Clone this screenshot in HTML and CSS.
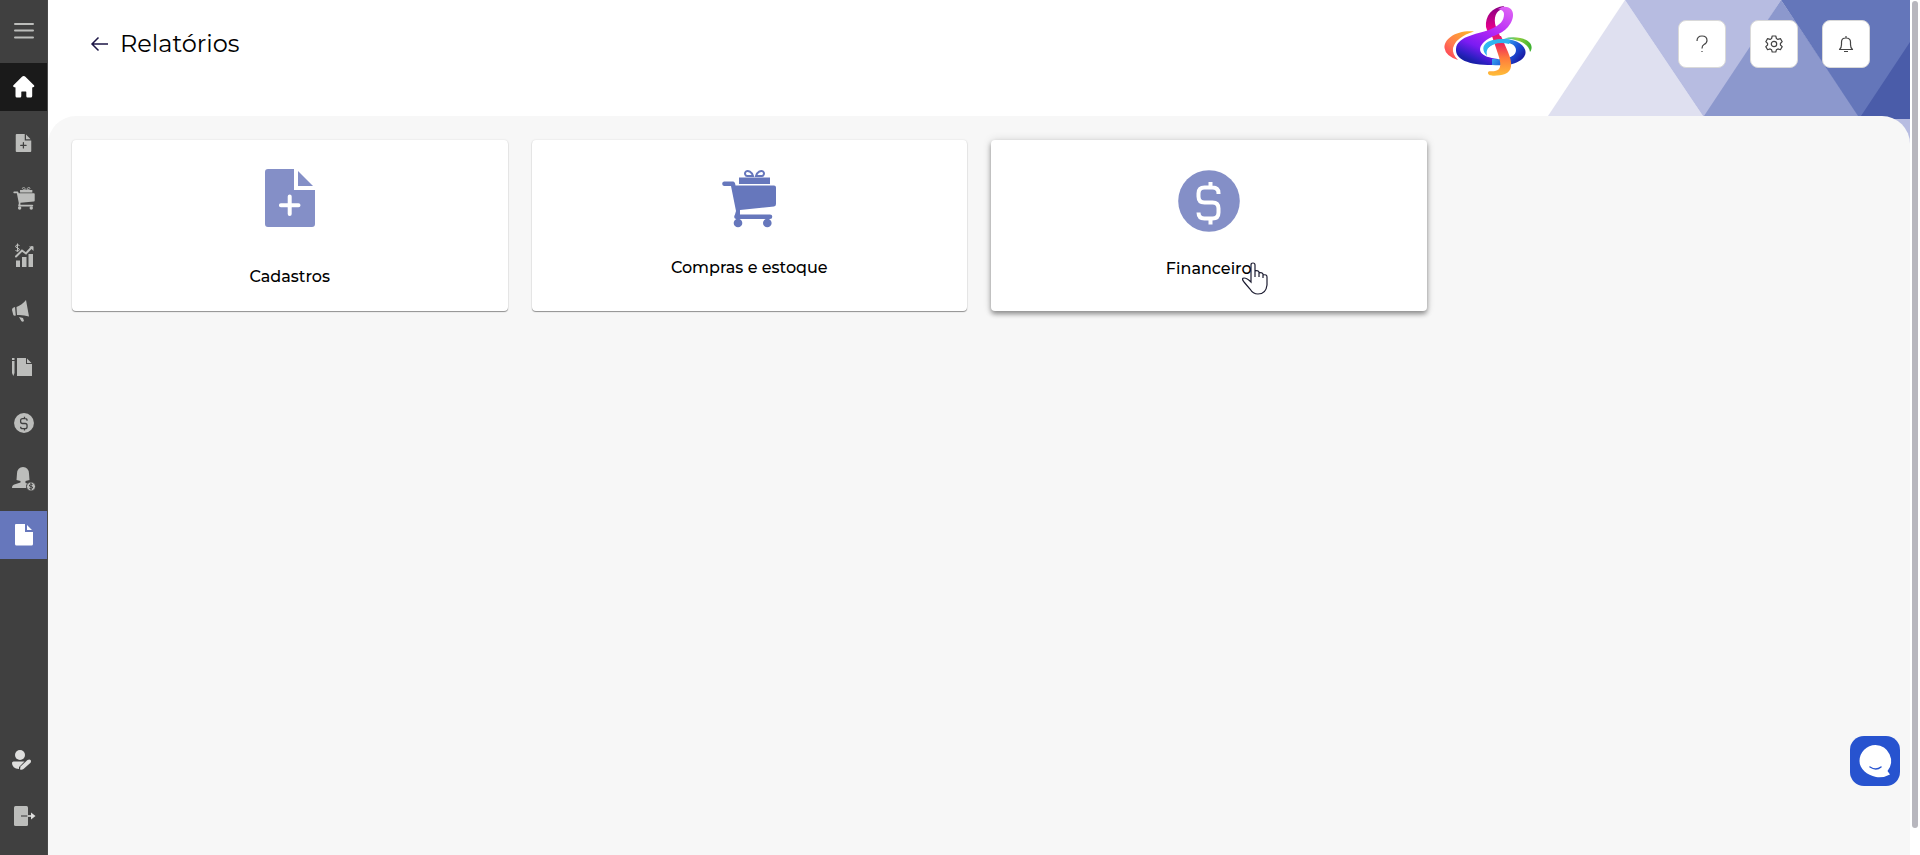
FILE: index.html
```html
<!DOCTYPE html>
<html lang="pt-BR">
<head>
  <meta charset="UTF-8" />
  <title>Relatórios</title>
  <meta name="viewport" content="width=device-width, initial-scale=1.0" />
  <link rel="stylesheet" href="styles.css">
</head>
<body>
  <!-- shared icons -->
  <svg class="sprite" aria-hidden="true">
    <symbol id="i-doc-plus" viewBox="0 0 50 58">
      <path fill-rule="evenodd" d="M3 0h26v21h21v34q0 3-3 3H3q-3 0-3-3V3q0-3 3-3zM22.700 27.500v6.800h-6.800a2 2 0 0 0 0 4h6.800v6.800a2 2 0 0 0 4 0v-6.800h6.800a2 2 0 0 0 0-4h-6.800v-6.800a2 2 0 0 0-4 0z"/>
      <path d="M33 2v15h15z"/>
    </symbol>
    <symbol id="i-cart" viewBox="0 0 54 58">
      <path d="M2 11.500h9q2 0 2.500 4H52q2 0 2 2V34q0 2-2 2.500L18 40v4.500h30a2.300 2.300 0 0 1 0 4.600H14q-3-1-1-4.500L14 41 9 16H2a2.300 2.300 0 0 1 0-4.500z"/>
      <path d="M17 7.500h31v6.500H17z"/>
      <circle cx="16" cy="53" r="4.300"/>
      <circle cx="45.300" cy="53" r="4.300"/>
      <path d="M31 6c-1-4-5-6-7-4.500S23.500 6 25 6zM34 6c1-4 5-6 7-4.500S41.500 6 40 6z" fill="none" stroke="currentColor" stroke-width="2"/>
    </symbol>
    <symbol id="i-dollar" viewBox="0 0 62 62">
      <circle cx="31" cy="31" r="30.800"/>
      <path class="cut" d="M40.500 24v-1q0-5.500-6-5.500h-8q-6 0-6 6v3q0 6 6 6h8q6 0 6 6v4q0 6-6 6h-8q-6 0-6-6M32.500 12v6M32.500 49v5.500"/>
    </symbol>
  </svg>

  <div class="app">
    <nav class="sidebar" aria-label="Menu principal">
      <button type="button" class="side-item" aria-label="Abrir menu">
        <svg viewBox="0 0 24 24"><path class="line" d="M3 5h18M3 11.500h18M3 18.500h18"/></svg>
      </button>
      <a href="#" class="side-item home" aria-label="Início">
        <svg viewBox="0 0 24 24"><path d="M11.700 1q1 0 1.700.8l8.800 8.700q.6 1.500-1.200 1.700l-.8.300V21q0 1.500-1.500 1.500h-3.200q-1.200 0-1.200-1.500v-4q0-.5-.5-.5h-4q-.5 0-.5.500v4q0 1.500-1.200 1.500H4.900q-1.400 0-1.400-1.500v-8.500l-1-.3Q.7 12 1.200 10.500L10 1.800Q10.800 1 11.700 1z"/></svg>
      </a>
      <a href="#" class="side-item" aria-label="Cadastros">
        <svg viewBox="0 0 24 24"><use href="#i-doc-plus" x="3" y="3" width="17" height="18"/></svg>
      </a>
      <a href="#" class="side-item" aria-label="Compras e estoque">
        <svg viewBox="0 0 24 24"><use href="#i-cart" x="1" y="0" width="22" height="23"/></svg>
      </a>
      <a href="#" class="side-item" aria-label="Vendas">
        <svg viewBox="0 0 24 24">
          <path d="M4 17.500h4V24H4zM10 14h4.500v10H10zM16.500 11H21v13h-4.500z"/>
          <path class="line" d="M4 13.500l6-6 4 3 6-6.500"/>
          <path d="M17 3.500h4.500V8z"/>
          <path class="thin" d="M7.500 2.500q-2-1.500-3.500 0T5.500 5q3 1 1.500 2.500t-3.500 0M5.500.500v8"/>
        </svg>
      </a>
      <a href="#" class="side-item" aria-label="Marketing">
        <svg viewBox="0 0 24 24"><path d="M14 1l3 16.500q-6-2-12-1.500L4.500 8Q10 6 14 1zM3 8l.8 8.500q-1.800.5-2.500-.5L0 11q0-2.500 3-3zM7 18l4 1 1 3q-1.500 1.500-2.700 0z"/></svg>
      </a>
      <a href="#" class="side-item" aria-label="Ordens de serviço">
        <svg viewBox="0 0 24 24"><path d="M0 3h2.500v2H0zM0 6h2.500v12l-1.200 3L0 18zM5 3h9v6h6v12H5zM15 3.500L19.500 8H15z"/></svg>
      </a>
      <a href="#" class="side-item" aria-label="Financeiro">
        <svg viewBox="0 0 24 24"><use href="#i-dollar" x="2" y="2" width="20" height="20"/></svg>
      </a>
      <a href="#" class="side-item" aria-label="Comissões">
        <svg viewBox="0 0 24 24">
          <path d="M11 0q5.500 0 6 6.500l.5 6.500-4 1v2l3 1v4H0q0-3 3-3.700l5.500-1.800V14l-4-1L5 6.500Q5.500 0 11 0z"/>
          <circle class="ring" cx="19" cy="19.500" r="4.500"/>
          <path class="cut-thin" d="M20.500 17.500q-2.500-1-3 .5t1.500 1.500 1.500 1.500-3 .5M19 16v7"/>
        </svg>
      </a>
      <a href="#" class="side-item current" aria-label="Relatórios" aria-current="page">
        <svg viewBox="0 0 24 24"><path d="M4 1h9v8h8v12q0 1.500-1.500 1.500h-15Q3 22.500 3 21V2q0-1 1-1zM15 2l5 5h-5z"/></svg>
      </a>
      <a href="#" class="side-item bottom" aria-label="Meu perfil">
        <svg viewBox="0 0 24 24"><circle cx="8" cy="7" r="5"/><path d="M1.500 13.500h11L7 19v2Q0 20.500 0 15q0-1.500 1.500-1.500z"/><path d="M8 21.500l.5-3 7-6.500q2-1 3 0t0 2.800l-7 6.200q-1.500 1-3.500.500z"/></svg>
      </a>
      <a href="#" class="side-item" aria-label="Sair">
        <svg viewBox="0 0 24 24"><rect x="2" y="2" width="14" height="20" rx="1.500"/><path class="cut" d="M9 12h7"/><path class="line" d="M16 12h4"/><path class="light" d="M19 8.500l4.500 3.500-4.500 3.500z"/></svg>
      </a>
    </nav>

    <main class="page">
      <svg class="pattern" viewBox="0 0 364 144" aria-hidden="true">
        <path fill="#dfe0f0" d="M0 119L79 0l80 119z"/>
        <path fill="#b7bce1" d="M79 0h156l-76 119z"/>
        <path fill="#8c98cd" d="M235 0l80 119H156z"/>
        <path fill="#6476ba" d="M235 0h129v119h-50z"/>
        <path fill="#4a5ca9" d="M364 42v77h-51z"/>
        <path fill="#b7bce1" d="M313 119h51v25h-51z"/>
      </svg>

      <header class="topbar">
        <a href="#" class="back" aria-label="Voltar">
          <svg viewBox="0 0 18 16"><path d="M18 8H2M8.500 1.500L2 8l6.500 6.500"/></svg>
        </a>
        <h1>Relatórios</h1>

        <svg class="logo" viewBox="0 0 140 88" role="img" aria-label="Logo">
          <defs>
            <linearGradient id="g-left" x1="0" y1="1" x2="1" y2="0"><stop offset="0" stop-color="#ff315c"/><stop offset=".4" stop-color="#ff7a50"/><stop offset="1" stop-color="#fdbb21"/></linearGradient>
            <linearGradient id="g-stem" gradientUnits="userSpaceOnUse" x1="0" y1="7" x2="0" y2="75"><stop offset="0" stop-color="#8a0080"/><stop offset=".3" stop-color="#e2008c"/><stop offset=".55" stop-color="#ee2a5a"/><stop offset=".75" stop-color="#ff7a3c"/><stop offset="1" stop-color="#ffbb38"/></linearGradient>
            <linearGradient id="g-ring" gradientUnits="userSpaceOnUse" x1="88" y1="8" x2="62" y2="66"><stop offset="0" stop-color="#dd62f5"/><stop offset=".45" stop-color="#b327f5"/><stop offset=".75" stop-color="#7a1bf2"/><stop offset=".93" stop-color="#2f1fc4"/><stop offset="1" stop-color="#1a1fa8"/></linearGradient>
            <linearGradient id="g-cyan" gradientUnits="userSpaceOnUse" x1="64" y1="40" x2="96" y2="65"><stop offset="0" stop-color="#2cc4f2"/><stop offset=".45" stop-color="#36a2ee"/><stop offset=".75" stop-color="#1c52d8"/><stop offset="1" stop-color="#1a1fa8"/></linearGradient>
            <linearGradient id="g-green" x1="0" y1="0" x2="1" y2="0"><stop offset="0" stop-color="#1fbcae"/><stop offset=".5" stop-color="#93ce3d"/><stop offset="1" stop-color="#39b02f"/></linearGradient>
          </defs>
          <path fill="url(#g-left)" d="M54 31.500C36 30 24 39 24.500 48q1 8 13.500 12-6-6-5-12 3-11 21-16.500z"/>
          <path fill="url(#g-green)" d="M84 38.500C100 34 117 42 110 52c-1-8-11-13-26-13.500z"/>
          <path fill="url(#g-stem)" d="M84 6C72 7 65 16 66 27l3 9h11l-4-9c-3-9 0-17 7-18z"/>
          <path fill="url(#g-ring)" d="M82 7c13-2 14 11 6 20-7 8-18 9-24 15-8 8-4 15 14 17v6C50 66 35 60 36 49 37 35 61 34 71 29c9-4 13-8 13-15q0-4-6-5z"/>
          <path fill="url(#g-cyan)" d="M67 56c-8-8-3-17 15-17 20-1 30 13 19 21-7 5-18 6-29 5v-6c17 1 24-3 24-9 0-8-14-9-22-6-7 3-8 7-7 12z"/>
          <path fill="url(#g-stem)" d="M72 36h9l7 16c5 12 4 19-3 22-6 2-17 3-17-1 0-3 4-1 7-2 7-1 6-8 3-17z"/>
          <path fill="#32b3ef" d="M68 43c5-4 13-5 22-3l-1 4c-8-2-16-1-21 4z"/>
        </svg>

        <div class="actions">
          <button type="button" aria-label="Ajuda">
            <svg viewBox="0 0 18 18"><path d="M4 6q0-5 5-5t5 4.500q0 2.500-3 4-2 1-2 4M9 16v1"/></svg>
          </button>
          <button type="button" aria-label="Configurações">
            <svg viewBox="0 0 18 18"><circle cx="9" cy="9" r="2.700"/><path d="M7.200 1h3.600l.6 2.500 1.500.9 2.500-.8 1.800 3.100-1.800 1.800v1.500l1.800 1.600-1.800 3.100-2.500-.8-1.500.9-.6 2.200H7.200l-.6-2.200-1.500-.9-2.500.8-1.800-3.100L2.600 10V8.500L.8 6.700l1.800-3.100 2.500.8 1.500-.9z"/></svg>
          </button>
          <button type="button" aria-label="Notificações">
            <svg viewBox="0 0 18 18"><path d="M2.500 14.500h13q-2-1.500-2-5V7q0-4-4.500-4T4.500 7v2.500q0 3.500-2 5zM9 3V1M7 16.500h4"/></svg>
          </button>
        </div>
      </header>

      <section class="content">
        <a href="#" class="card">
          <svg class="icon-doc"><use href="#i-doc-plus"/></svg>
          <span class="label">Cadastros</span>
        </a>
        <a href="#" class="card">
          <svg class="icon-cart"><use href="#i-cart"/></svg>
          <span class="label">Compras e estoque</span>
        </a>
        <a href="#" class="card hovered">
          <svg class="icon-dollar"><use href="#i-dollar"/></svg>
          <span class="label">Financeiro
            <svg class="pointer" viewBox="0 0 26 33" aria-hidden="true"><path d="M9 20V3q0-2 2-2t2 2v12-6q3-1 4 1v5-4q3-1 4 1v4-3q4-1 4 2v8q-1 9-9 9-5 0-8-5l-6-7q-3-4 0-4 3 0 7 4z"/></svg>
          </span>
        </a>
      </section>
    </main>

    <div class="scroll"><div class="thumb"></div></div>
  </div>

  <button type="button" class="chat" aria-label="Abrir chat">
    <svg viewBox="0 0 50 50"><path fill="#fff" d="M25.500 9a16 16 0 0 1 12 26l2.500 3.500Q34 42 26 41C17 39 9.500 33 9.500 25a16 16 0 0 1 16-16z"/><path class="smile" d="M20 31q6 4 11 0"/></svg>
  </button>
</body>
</html>
```

FILE: styles.css
```css
* {
  box-sizing: border-box;
}

body {
  margin: 0;
  background-color: #fff;
  color: #000;
  font-family: Montserrat, Inter, sans-serif;
  font-size: 16px;
}

a {
  color: inherit;
  text-decoration: none;
}

button {
  padding: 0;
  border: none;
  background: none;
  cursor: pointer;
}

svg {
  display: block;
  fill: currentColor;
}

.sprite {
  position: absolute;
  width: 0;
  height: 0;
}

.app {
  display: flex;
  min-height: 100vh;
}

/* sidebar */
.sidebar {
  display: flex;
  flex-direction: column;
  gap: 8px;
  flex: 0 0 48px;
  padding: 7px 0 15px;
  background-color: #404040;
  border-right: 1px solid #4a4a4a;
}

.side-item {
  display: flex;
  align-items: center;
  height: 48px;
  padding-left: 12px;
  color: #bcbdbb;
  --cut: #404040;
}

.side-item svg {
  width: 24px;
  height: 24px;
  overflow: visible;
}

.side-item.home {
  background-color: #1a1a1a;
  color: #fff;
}

.side-item.current {
  background-color: #6677bc;
  color: #fff;
}

.side-item.bottom {
  margin-top: auto;
  color: #dededd;
}

.line {
  fill: none;
  stroke: currentColor;
  stroke-width: 2;
  stroke-linecap: round;
}

.thin {
  fill: none;
  stroke: currentColor;
  stroke-width: 1;
}

.cut {
  fill: none;
  stroke: var(--cut);
  stroke-width: 4;
}

.side-item > svg > .cut {
  stroke: #777;
  stroke-width: 2;
}

.cut-thin {
  fill: none;
  stroke: var(--cut);
  stroke-width: 1;
}

.ring {
  stroke: #404040;
  stroke-width: 1;
}

.light {
  fill: #dededd;
}

/* page */
.page {
  position: relative;
  display: flex;
  flex-direction: column;
  flex: 1;
  min-width: 0;
}

.pattern {
  position: absolute;
  top: 0;
  right: 0;
  width: 364px;
  height: 144px;
}

.topbar {
  position: relative;
  display: flex;
  align-items: center;
  height: 88px;
  margin-bottom: 28px;
  padding: 0 40px 0 42px;
}

.back {
  margin-right: 12px;
  color: #1d1646;
}

.back svg {
  width: 18px;
  height: 16px;
  fill: none;
  stroke: currentColor;
  stroke-width: 1.5;
}

h1 {
  margin: 0;
  font-size: 24px;
  font-weight: 400;
  line-height: 32px;
}

.logo {
  width: 140px;
  height: 88px;
  margin-left: auto;
  margin-right: 118px;
}

.actions {
  display: flex;
  gap: 24px;
}

.actions button {
  display: flex;
  align-items: center;
  justify-content: center;
  width: 48px;
  height: 48px;
  background-color: #fff;
  border: 1px solid #d9d9d9;
  border-radius: 8px;
  color: #444;
}

.actions svg {
  width: 18px;
  height: 18px;
  fill: none;
  stroke: currentColor;
  stroke-width: 1.2;
  stroke-linejoin: round;
}

.content {
  position: relative;
  flex: 1;
  display: grid;
  grid-template-columns: repeat(4, 1fr);
  align-content: start;
  gap: 24px;
  padding: 24px;
  background-color: #f7f7f7;
  border-radius: 28px 28px 0 0;
}

.card {
  display: flex;
  flex-direction: column;
  align-items: center;
  padding: 29px 24px 22px;
  background-color: #fff;
  border-radius: 4px;
  box-shadow: 0 1px 1px rgba(0, 0, 0, 0.4), 0 0 2px rgba(0, 0, 0, 0.12);
  color: #848fc7;
  --cut: #fff;
}

.card.hovered {
  box-shadow: 0 3px 5px rgba(0, 0, 0, 0.4), 0 0 10px rgba(0, 0, 0, 0.12);
}

.icon-doc {
  width: 50px;
  height: 58px;
  margin-bottom: 14px;
}

.icon-cart {
  width: 54px;
  height: 60px;
  margin-bottom: 3px;
  color: #6677bc;
}

.icon-dollar {
  width: 62px;
  height: 64px;
}

.label {
  position: relative;
  margin-top: 24px;
  font-size: 16px;
  font-weight: 500;
  line-height: 24px;
  color: #000;
}

/* hand cursor over the hovered card */
.pointer {
  position: absolute;
  top: 5px;
  right: -16px;
  width: 26px;
  height: 33px;
  fill: #fff;
  stroke: #1b1b30;
  stroke-width: 1.2;
}

.scroll {
  flex: 0 0 10px;
  padding: 1px 2px 27px;
  display: flex;
}

.thumb {
  flex: 1;
  border-radius: 3px;
  background-color: #b8b7be;
}

.chat {
  position: fixed;
  right: 20px;
  bottom: 69px;
  width: 50px;
  height: 50px;
  background-color: #2753cf;
  border-radius: 14px;
}

.smile {
  fill: none;
  stroke: #2753cf;
  stroke-width: 1.5;
  stroke-linecap: round;
}
```
